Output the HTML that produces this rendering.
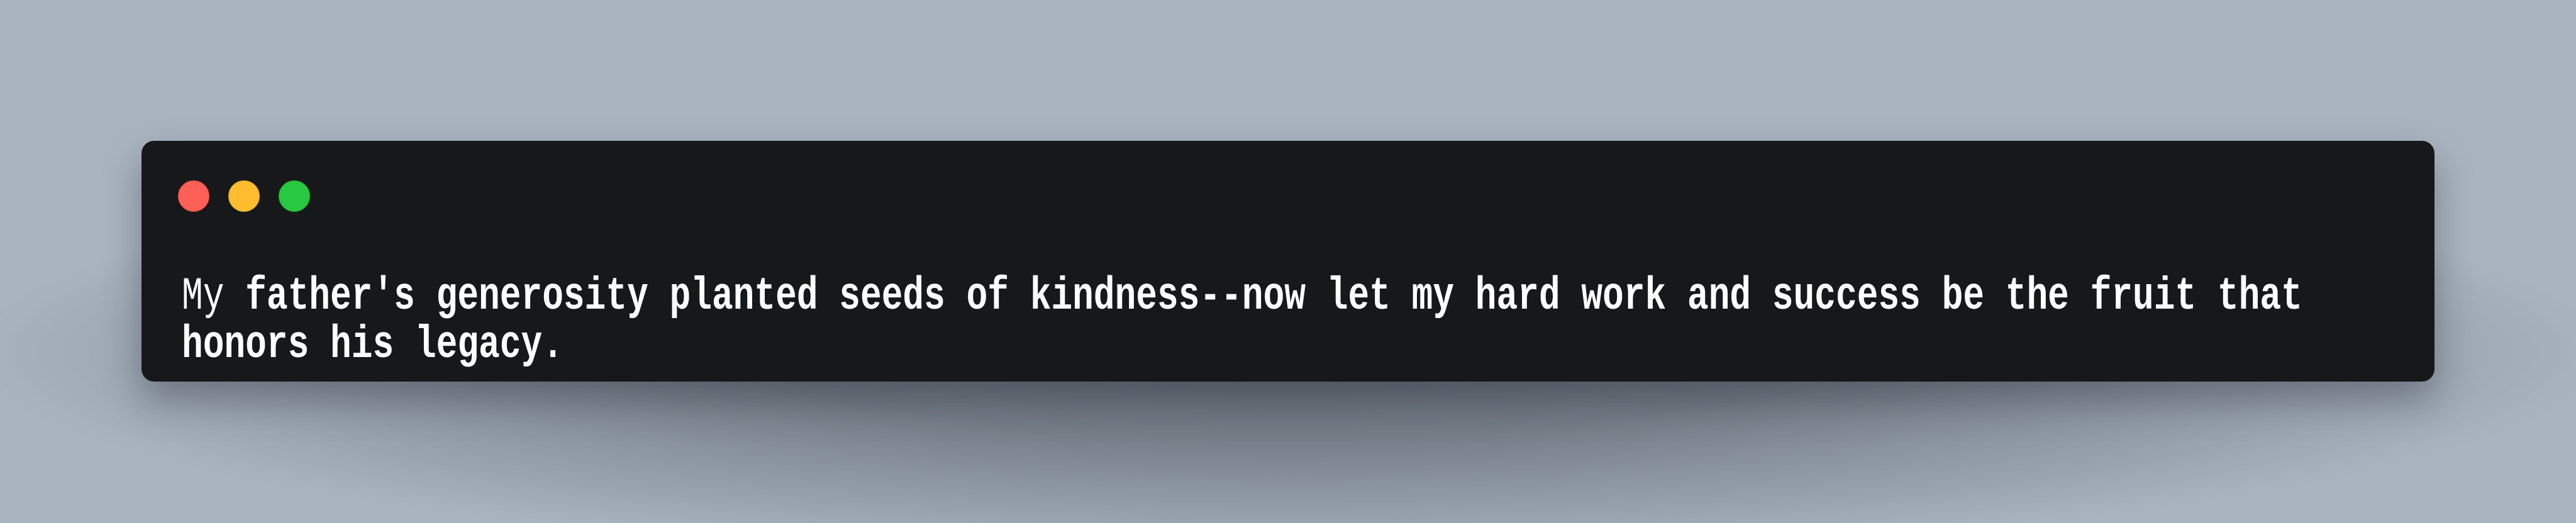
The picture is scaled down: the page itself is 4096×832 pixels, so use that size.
<!DOCTYPE html>
<html><head><meta charset="utf-8"><style>
html,body{margin:0;padding:0;width:4096px;height:832px;overflow:hidden;}
body{background:radial-gradient(ellipse 2100px 330px at 2048px 560px, rgba(100,108,118,1) 0%, rgba(110,118,128,0.9) 40%, rgba(169,180,191,0) 100%), #a9b4bf;}
.win{position:absolute;left:225px;top:224px;width:3646px;height:383px;background:#17181a;border-radius:20px;box-shadow:0 30px 60px rgba(25,30,40,0.35);}
.dot{position:absolute;top:63px;width:50px;height:50px;border-radius:50%;}
.txt{position:absolute;left:64px;top:210px;font-family:"Liberation Mono",monospace;font-size:56.2px;line-height:58.5px;color:#fff;font-weight:bold;white-space:pre;transform:scaleY(1.3);transform-origin:0 0;}
.r{font-weight:normal;}
</style></head><body>
<div class="win">
<div class="dot" style="left:58px;background:#fe5f57;border:1px solid #e0443e;box-sizing:border-box"></div>
<div class="dot" style="left:138px;background:#febc2e;border:1px solid #dea123;box-sizing:border-box"></div>
<div class="dot" style="left:218px;background:#28c840;border:1px solid #1aab29;box-sizing:border-box"></div>
<div class="txt"><span class="r">My</span> father's generosity planted seeds of kindness--now let my hard work and success be the fruit that
honors his legacy.</div>
</div>
</body></html>
